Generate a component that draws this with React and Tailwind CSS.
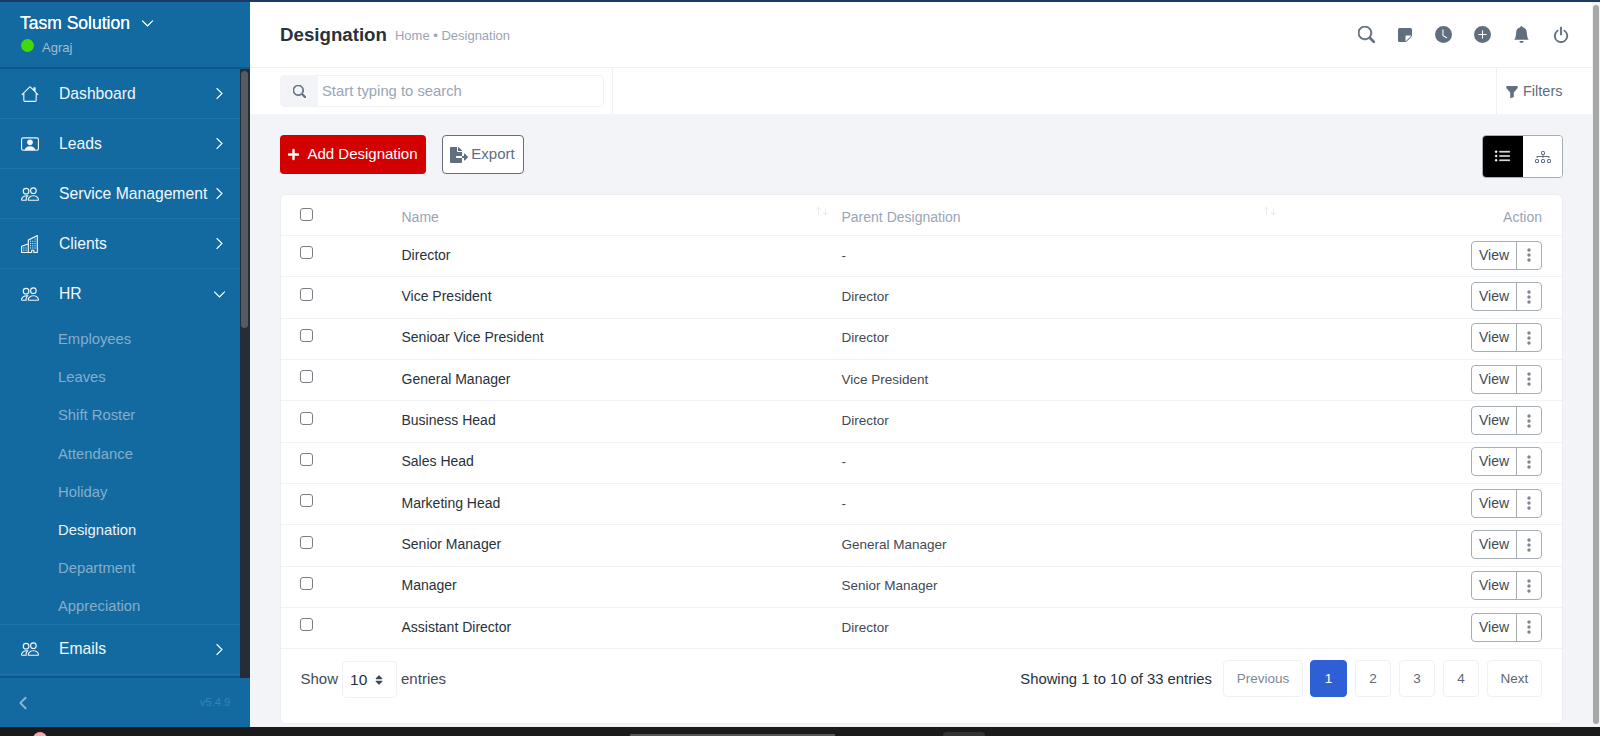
import React from 'react';
import {
  BsSearch, BsStickyFill, BsClockFill, BsPlusCircleFill, BsBellFill, BsPower, BsFunnelFill,
  BsListUl, BsDiagram3, BsThreeDotsVertical, BsHouse, BsPersonVideo, BsPeople, BsBuildings,
  BsChevronRight, BsChevronDown, BsChevronLeft, BsPlusLg, BsArrowUp, BsArrowDown,
} from 'react-icons/bs';
import { FaFileExport, FaSort } from 'react-icons/fa';

const SUB_ITEMS = ['Employees', 'Leaves', 'Shift Roster', 'Attendance', 'Holiday', 'Designation', 'Department', 'Appreciation'];

const ROWS = [
  ['Director', '-'],
  ['Vice President', 'Director'],
  ['Senioar Vice President', 'Director'],
  ['General Manager', 'Vice President'],
  ['Business Head', 'Director'],
  ['Sales Head', '-'],
  ['Marketing Head', '-'],
  ['Senior Manager', 'General Manager'],
  ['Manager', 'Senior Manager'],
  ['Assistant Director', 'Director'],
];

const MenuItem = ({ icon: Icon, label }) => (
  <div className="h-[50px] flex items-center pl-[21px] pr-[14px] border-b border-[#1c75ac] text-[#f2f8fc]">
    <Icon className="w-[18px] h-[18px] shrink-0" />
    <span className="ml-[20px] text-[15.7px] flex-1 whitespace-nowrap">{label}</span>
    <BsChevronRight className="w-[13px] h-[13px] stroke-[0.8]" />
  </div>
);

const SortArrows = () => (
  <span className="flex text-[#dcdfe4] -mt-[8px] -ml-[2px]">
    <BsArrowUp className="w-[9px] h-[16px] -mr-[2px]" />
    <BsArrowDown className="w-[9px] h-[16px]" />
  </span>
);

const Checkbox = () => (
  <span className="block w-[13px] h-[13px] rounded-[3px] border border-[#7b7f85] bg-white" />
);

const PageButton = ({ children, active, className }) => (
  <span className={`h-[37px] flex items-center justify-center rounded-[4px] border text-[13.5px] ${active ? 'bg-[#2f5fd4] border-[#2f5fd4] text-white' : 'bg-white border-[#eef0f3]'} ${className}`}>
    {children}
  </span>
);

const App = () => {
  return (
    <div className="h-screen w-full overflow-hidden flex flex-col bg-[#1a1a1a] text-[#28313c]" style={{ fontFamily: '"Liberation Sans", Arial, sans-serif' }}>
      <div className="h-[2px] bg-[#1b3a63] shrink-0" />
      <div className="flex h-[725px] shrink-0">
        {/* sidebar */}
        <aside className="w-[250px] shrink-0 flex flex-col bg-[#136aa1]">
          <div className="h-[67px] shrink-0 pl-5 pt-[11px] border-b-2 border-[#10588a]">
            <div className="flex items-center text-white">
              <span className="text-[17.5px] font-medium leading-[20px] [text-shadow:0_0_0.4px_white]">Tasm Solution</span>
              <BsChevronDown className="w-[13px] h-[13px] ml-[11px] stroke-[0.8]" />
            </div>
            <div className="flex items-center mt-[5px]">
              <span className="w-[13px] h-[13px] rounded-full bg-[#3ddc0a] -mt-[5px] ml-px" />
              <span className="ml-2 text-[13px] text-[#9dbdd3]">Agraj</span>
            </div>
          </div>
          <div className="flex-1 flex min-h-0">
            <nav className="flex-1 overflow-hidden border-b-2 border-[#10588a]">
              <MenuItem icon={BsHouse} label="Dashboard" />
              <MenuItem icon={BsPersonVideo} label="Leads" />
              <MenuItem icon={BsPeople} label="Service Management" />
              <MenuItem icon={BsBuildings} label="Clients" />
              <div className="border-b border-[#1c75ac]">
                <div className="h-[50px] flex items-center pl-[21px] pr-[14px] text-[#f2f8fc]">
                  <BsPeople className="w-[18px] h-[18px] shrink-0" />
                  <span className="ml-[20px] text-[15.7px] flex-1">HR</span>
                  <BsChevronDown className="w-[13px] h-[13px] stroke-[0.8]" />
                </div>
                <div className="pl-[58px] pt-[1px] -mb-[2px]">
                  {SUB_ITEMS.map(item => (
                    <div key={item} className={`h-[38.2px] flex items-center text-[14.8px] ${item === 'Designation' ? 'text-[#eaf3f9]' : 'text-[#84aeca]'}`}>{item}</div>
                  ))}
                </div>
              </div>
              <MenuItem icon={BsPeople} label="Emails" />
            </nav>
            <div className="w-[10px] bg-[#262d36] pt-[2px]">
              <div className="w-[7px] h-[257px] rounded-full bg-[#575b61] ml-[1px]" />
            </div>
          </div>
          <div className="h-[49px] shrink-0 flex items-center justify-between pl-[16px] pr-5">
            <BsChevronLeft className="w-[14px] h-[14px] text-[#8fb4ce] stroke-[1.2]" />
            <span className="text-[11px] text-[#3b82b3]">v5.4.9</span>
          </div>
        </aside>

        {/* main */}
        <main className="flex-1 min-w-0 flex flex-col bg-[#f2f4f7]">
          <header className="h-[66px] shrink-0 bg-white flex items-center pl-[30px] pr-[22px] border-b border-[#eef0f3]">
            <h1 className="text-[18.7px] font-bold text-[#28313c] mt-[2px]">Designation</h1>
            <span className="ml-2 text-[13px] text-[#99a5b5] mt-[3px]">Home • Designation</span>
            <div className="ml-auto flex items-center gap-[22px] text-[#616e80]">
              <BsSearch className="w-[17px] h-[17px] stroke-[0.8]" />
              <BsStickyFill className="w-[16px] h-[16px]" />
              <BsClockFill className="w-[17px] h-[17px]" />
              <BsPlusCircleFill className="w-[17px] h-[17px]" />
              <BsBellFill className="w-[17px] h-[17px]" />
              <BsPower className="w-[18px] h-[18px] stroke-[0.8]" />
            </div>
          </header>
          <div className="h-[46px] shrink-0 bg-white flex">
            <div className="w-[363px] border-r border-[#eef0f3] pl-[30px] pt-[7px]">
              <div className="flex w-[324px] h-[32px] border border-[#f1f2f5] rounded-[4px] overflow-hidden">
                <span className="w-[37px] bg-[#f2f4f7] flex items-center justify-center text-[#616e80]">
                  <BsSearch className="w-[13px] h-[13px] stroke-1" />
                </span>
                <span className="pl-[4px] flex items-center text-[14.8px] text-[#99a5b5]">Start typing to search</span>
              </div>
            </div>
            <div className="ml-auto w-[96px] border-l border-[#eef0f3] pl-2 pt-[1px] flex items-center gap-1">
              <BsFunnelFill className="w-[14px] h-[14px] text-[#616e80]" />
              <span className="text-[14.5px] text-[#616e80]">Filters</span>
            </div>
          </div>

          <div className="flex-1 min-h-0 pl-[29.5px] pr-[10px] pt-[21px]">
            <div className="pr-[19px]">
              <div className="flex justify-between items-start h-[59px]">
                <div className="flex gap-[16px]">
                  <button className="h-[39px] w-[146px] rounded-[4px] bg-[#d30000] text-white flex items-center justify-center gap-[7px] text-[15px]">
                    <BsPlusLg className="w-[13px] h-[13px] stroke-2" /> Add Designation
                  </button>
                  <button className="h-[39px] w-[82px] rounded-[4px] border border-[#616e80] bg-white text-[#616e80] flex items-center justify-center gap-[3px] text-[15px]">
                    <FaFileExport className="w-[18px] h-[16px]" /> Export
                  </button>
                </div>
                <div className="flex h-[43px] rounded-[4px] border border-[#a7adb5] overflow-hidden">
                  <span className="w-[41px] bg-black text-white flex items-center justify-center -ml-px">
                    <BsListUl className="w-[17px] h-[17px] stroke-[0.4]" />
                  </span>
                  <span className="w-[39px] bg-white text-[#616e80] flex items-center justify-center">
                    <BsDiagram3 className="w-4 h-4" />
                  </span>
                </div>
              </div>
              <div className="bg-white rounded-[6px] border border-[#eceef2] h-[530px] flex flex-col text-[14px]">
                <div className="h-[41px] shrink-0 flex items-center border-b border-[#f1f2f5] text-[#99a5b5]">
                  <span className="w-[121px] pl-[19px] -mt-[1px]"><Checkbox /></span>
                  <span className="w-[414px] mt-[5px]">Name</span>
                  <span className="w-[26px]"><SortArrows /></span>
                  <span className="w-[422px] mt-[5px]">Parent Designation</span>
                  <span><SortArrows /></span>
                  <span className="ml-auto pr-5 mt-[5px]">Action</span>
                </div>
                {ROWS.map(([name, parent]) => (
                  <div key={name} className="h-[41.35px] shrink-0 flex items-center border-b border-[#f1f2f5] pb-[2px]">
                    <span className="w-[121px] pl-[19px] -mt-[5px]"><Checkbox /></span>
                    <span className="w-[440px] text-[14px] text-[#28313c]">{name}</span>
                    <span className="text-[13.5px] text-[#3f4a57] mt-[1px]">{parent}</span>
                    <span className="ml-auto mr-5 flex h-[29px] rounded-[4px] border border-[#a7adb5] text-[#3f4a57]">
                      <span className="w-[45px] border-r border-[#a7adb5] flex items-center justify-center text-[14px]">View</span>
                      <span className="w-[24px] flex items-center justify-center text-[#7e8792]">
                        <BsThreeDotsVertical className="w-[16px] h-[16px] stroke-[0.4]" />
                      </span>
                    </span>
                  </div>
                ))}
                <div className="flex-1 flex items-start justify-between pl-5 pr-5 pt-[11px]">
                  <div className="flex items-center text-[15px] text-[#3f4a57] h-[37px]">
                    <span>Show</span>
                    <span className="mx-[4px] w-[55px] h-[37px] border border-[#f1f2f5] rounded-[4px] flex items-center justify-between pl-[7px] pr-3 mt-[2px] text-[15.5px] text-[#28313c]">
                      10 <FaSort className="w-[10px] h-[12px] text-[#3f4a57]" />
                    </span>
                    <span>entries</span>
                  </div>
                  <div className="flex items-center h-[37px]">
                    <span className="text-[14.8px] text-[#28313c] mr-[11px] mt-[1px]">Showing 1 to 10 of 33 entries</span>
                    <PageButton className="w-[80px] text-[#7d8794]">Previous</PageButton>
                    <PageButton active className="w-[37px] ml-[7px]">1</PageButton>
                    <PageButton className="w-[36px] ml-[8px] text-[#5f6670]">2</PageButton>
                    <PageButton className="w-[36px] ml-[8px] text-[#5f6670]">3</PageButton>
                    <PageButton className="w-[36px] ml-[8px] text-[#5f6670]">4</PageButton>
                    <PageButton className="w-[55px] ml-[8px] text-[#5f6670]">Next</PageButton>
                  </div>
                </div>
              </div>
            </div>
          </div>
        </main>
        <div className="w-[8px] shrink-0 bg-[#f2f4f7]">
          <div className="w-[6px] h-[719px] mt-[3px] ml-px rounded-full bg-[#a8a8a8]" />
        </div>
      </div>
      <div className="relative flex-1">
        <span className="absolute left-[33px] top-[5px] w-[14px] h-[14px] rounded-full bg-[#f4a7ae]" />
        <span className="absolute left-[630px] top-[7px] w-[205px] h-[2px] bg-[#555555]" />
        <span className="absolute left-[943px] top-[5px] w-[42px] h-[4px] rounded-t-md bg-[#333333]" />
      </div>
    </div>
  );
};

export default App;
